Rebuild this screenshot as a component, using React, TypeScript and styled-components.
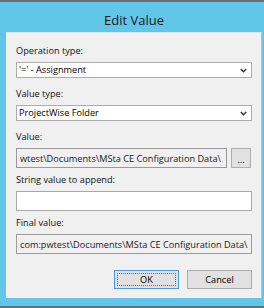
import React from 'react'
import styled, { createGlobalStyle } from 'styled-components'

const GlobalStyle = createGlobalStyle`
  html, body {
    margin: 0;
    padding: 0;
    background: #ffffff;
  }
  * {
    box-sizing: border-box;
  }
`

const Window = styled.div`
  width: 264px;
  height: 308px;
  display: flex;
  flex-direction: column;
  background: #62c6e9;
  border-top: 2px solid #6e6e6e;
  border-bottom: 2px solid #6e6e6e;
  padding: 0 2px 8px 6px;
  font-family: 'Open Sans', 'Noto Sans', sans-serif;
  color: #000;
`

const TitleBar = styled.div`
  height: 30px;
  padding-top: 9px;
  text-align: center;
  font-size: 13px;
  line-height: 18px;
  color: #1b1b1b;
`

const Client = styled.div`
  flex: 1;
  display: flex;
  flex-direction: column;
  background: #f0f0f0;
  border-top: 1px solid #e4e4e4;
  border-left: 1px solid #fbfbfb;
  border-right: 1px solid #bdbdbd;
  border-bottom: 1px solid #f6f6f6;
  padding: 12px 9px 0 9px;
  font-size: 9.2px;
`

const Field = styled.div`
  height: 43px;
  display: flex;
  flex-direction: column;
`

const Label = styled.div`
  line-height: 12px;
  margin-bottom: 5px;
  white-space: nowrap;
  color: #111;
`

const Combo = styled.div`
  height: 16px;
  display: flex;
  align-items: center;
  justify-content: space-between;
  background: #ffffff;
  border: 1px solid #acacac;
  padding-left: 2px;
  padding-right: 4px;
  line-height: 14px;
`

const TextBox = styled.div<{ $readOnly?: boolean }>`
  flex: 1;
  height: 20px;
  display: flex;
  align-items: center;
  overflow: hidden;
  white-space: nowrap;
  background: ${p => (p.$readOnly ? '#f0f0f0' : '#ffffff')};
  border: 1px solid ${p => (p.$readOnly ? '#9a9a9a' : '#a8a8a8')};
  padding-left: ${p => (p.$readOnly ? '3px' : '2px')};
  color: #1a1a1a;
`

const Row = styled.div`
  display: flex;
  align-items: center;
  gap: 4px;
`

const Button = styled.div<{ $default?: boolean; $width: number }>`
  width: ${p => p.$width}px;
  height: 19px;
  display: flex;
  align-items: stretch;
  justify-content: center;
  background: #e1e1e1;
  border: 1px solid ${p => (p.$default ? '#4c98dc' : '#adadad')};
  color: #000;
`

const Caption = styled.span<{ $focused?: boolean }>`
  flex: 1;
  display: flex;
  align-items: center;
  justify-content: center;
  margin: 2px;
  border: 1px dotted ${p => (p.$focused ? '#6a6a6a' : 'transparent')};
`

const BrowseButton = styled(Button)`
  height: 20px;
  margin-right: 1px;
  align-items: center;
  padding-top: 3px;
`

const Actions = styled.div`
  display: flex;
  justify-content: flex-end;
  gap: 8px;
  margin-top: 10px;
`

const Chevron = () => (
  <svg width="7" height="5" viewBox="0 0 7 5">
    <path d="M0.8 1 L3.5 3.7 L6.2 1" fill="none" stroke="#333" strokeWidth="1.4" />
  </svg>
)

export default function App() {
  return (
    <>
      <GlobalStyle />
      <Window>
        <TitleBar>Edit Value</TitleBar>
        <Client>
          <Field>
            <Label>Operation type:</Label>
            <Combo>
              <span>'=' - Assignment</span>
              <Chevron />
            </Combo>
          </Field>
          <Field>
            <Label>Value type:</Label>
            <Combo>
              <span>ProjectWise Folder</span>
              <Chevron />
            </Combo>
          </Field>
          <Field>
            <Label>Value:</Label>
            <Row>
              <TextBox $readOnly>wtest\Documents\MSta CE Configuration Data\</TextBox>
              <BrowseButton $width={20}>...</BrowseButton>
            </Row>
          </Field>
          <Field>
            <Label>String value to append:</Label>
            <Row>
              <TextBox />
            </Row>
          </Field>
          <Field>
            <Label>Final value:</Label>
            <Row>
              <TextBox $readOnly>com:pwtest\Documents\MSta CE Configuration Data\</TextBox>
            </Row>
          </Field>
          <Actions>
            <Button $default $width={65}>
              <Caption $focused>OK</Caption>
            </Button>
            <Button $width={65}>
              <Caption>Cancel</Caption>
            </Button>
          </Actions>
        </Client>
      </Window>
    </>
  )
}
